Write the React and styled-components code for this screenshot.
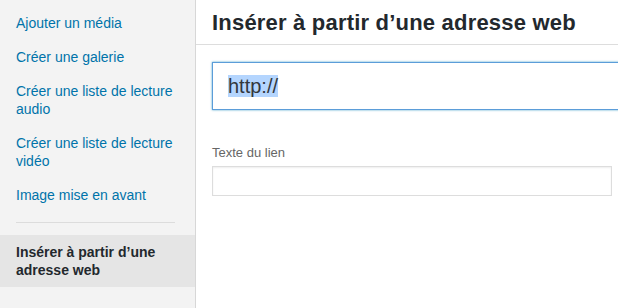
import styled, { createGlobalStyle } from "styled-components";

const GlobalStyle = createGlobalStyle`
    * {
        box-sizing: border-box;
    }
    html, body {
        margin: 0;
        padding: 0;
        background: #fff;
    }
    body {
        font-family: "Liberation Sans", Arial, sans-serif;
        -webkit-font-smoothing: antialiased;
    }
`;

const menuItems = [
    "Ajouter un média",
    "Créer une galerie",
    "Créer une liste de lecture audio",
    "Créer une liste de lecture vidéo",
    "Image mise en avant",
];

export default function App() {
    return (
        <>
            <GlobalStyle />
            <Frame>
                <Menu>
                    {menuItems.map((label) => (
                        <MenuLink key={label}>{label}</MenuLink>
                    ))}
                    <Separator />
                    <MenuLink active>Insérer à partir d’une adresse web</MenuLink>
                </Menu>
                <Main>
                    <Header>
                        <Title>Insérer à partir d’une adresse web</Title>
                    </Header>
                    <Content>
                        <UrlField>
                            <Selected>http://</Selected>
                        </UrlField>
                        <Settings>
                            <Label>Texte du lien</Label>
                            <TextInput type="text" />
                        </Settings>
                    </Content>
                </Main>
            </Frame>
        </>
    );
}

const Frame = styled.div`
    display: flex;
    width: 618px;
    height: 308px;
    overflow: hidden;
`;

const Menu = styled.nav`
    flex: 0 0 196px;
    display: flex;
    flex-direction: column;
    padding-top: 6px;
    background-color: #f3f3f3;
    border-right: 1px solid #d7d7d7;
`;

const MenuLink = styled.a`
    display: block;
    padding: 8px 20px 8px 16px;
    font-size: 14px;
    line-height: 18px;
    color: ${({ active }) => (active ? "#23282d" : "#0073aa")};
    font-weight: ${({ active }) => (active ? 700 : 400)};
    background-color: ${({ active }) => (active ? "#e5e5e5" : "transparent")};
    text-decoration: none;
`;

const Separator = styled.div`
    height: 1px;
    margin: 10px 20px 12px 16px;
    background-color: #dcdcdc;
`;

const Main = styled.main`
    flex: 1;
    min-width: 0;
    display: flex;
    flex-direction: column;
    overflow: hidden;
`;

const Header = styled.header`
    height: 45px;
    display: flex;
    align-items: center;
    padding: 1px 16px 0;
    border-bottom: 1px solid #ddd;
`;

const Title = styled.h1`
    margin: 0;
    font-size: 22px;
    line-height: 26px;
    font-weight: 700;
    letter-spacing: 0.2px;
    color: #23282d;
    white-space: nowrap;
`;

const Content = styled.div`
    padding: 17px 16px;
`;

const UrlField = styled.div`
    width: 440px;
    height: 48px;
    display: flex;
    align-items: center;
    padding: 0 15px;
    border: 1px solid #5b9dd9;
    box-shadow: 0 0 2px rgba(30, 140, 190, 0.8);
    background: #fff;
    font-size: 20px;
    color: #32373c;
`;

const Selected = styled.span`
    background-color: #b4d5fe;
    line-height: 22px;
`;

const Settings = styled.div`
    display: flex;
    flex-direction: column;
    gap: 4px;
    width: 400px;
    margin-top: 34px;
`;

const Label = styled.label`
    font-size: 13px;
    line-height: 18px;
    color: #666;
`;

const TextInput = styled.input`
    width: 100%;
    height: 30px;
    margin: 0;
    border: 1px solid #ddd;
    box-shadow: inset 0 1px 2px rgba(0, 0, 0, 0.07);
    background: #fff;
    font-size: 14px;
    outline: none;
`;
